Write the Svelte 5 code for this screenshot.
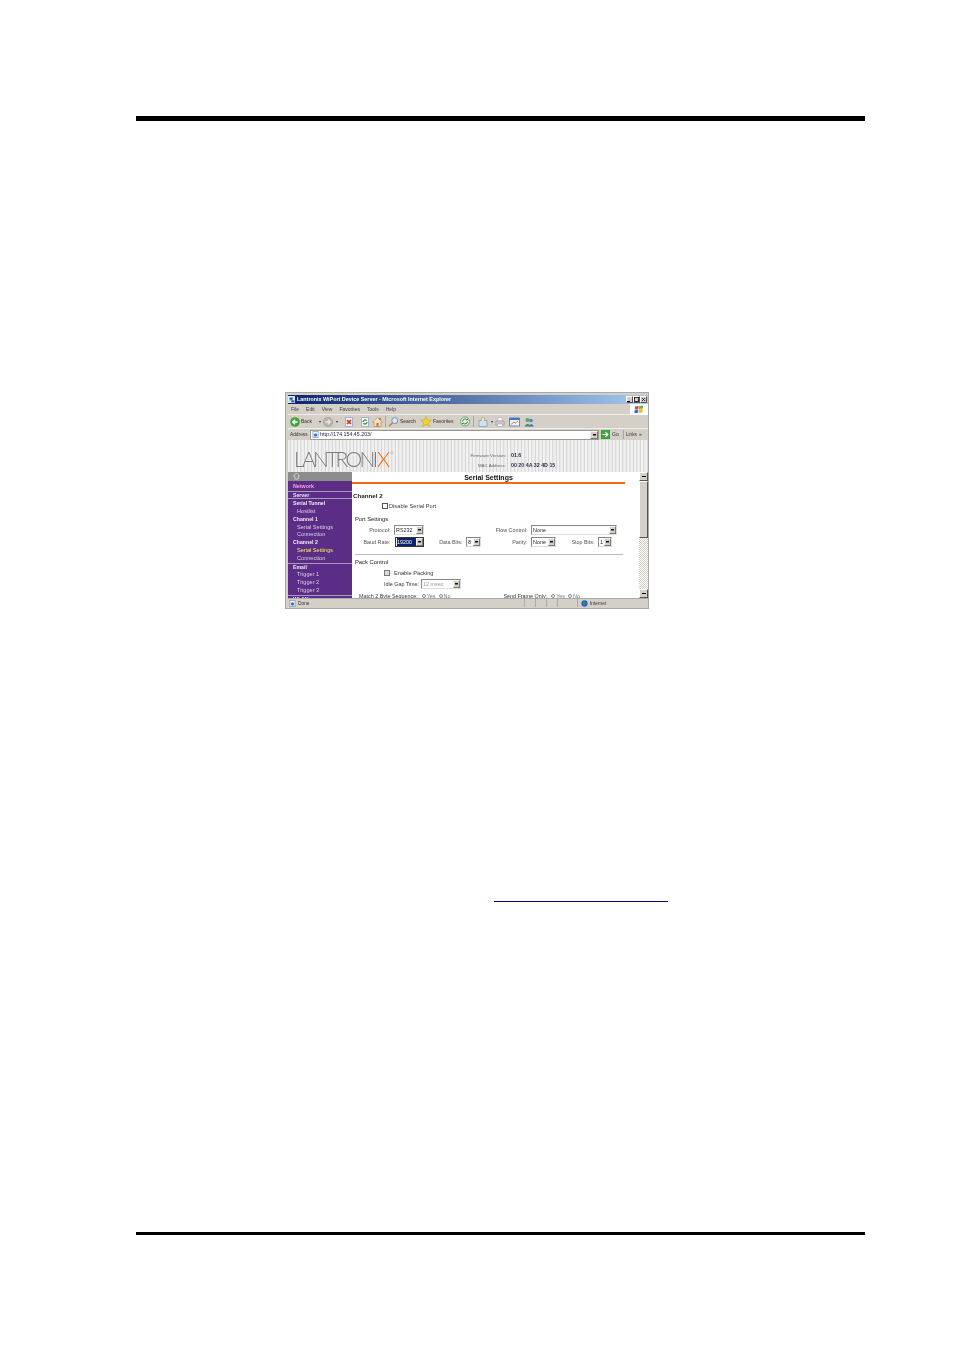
<script>
	const menus = ['File', 'Edit', 'View', 'Favorites', 'Tools', 'Help'];
	const sections = [
		[{ label: 'Network', kind: 'pink' }],
		[{ label: 'Server', kind: 'head' }],
		[
			{ label: 'Serial Tunnel', kind: 'head' },
			{ label: 'Hostlist', kind: 'sub' },
			{ label: 'Channel 1', kind: 'head' },
			{ label: 'Serial Settings', kind: 'sub' },
			{ label: 'Connection', kind: 'sub' },
			{ label: 'Channel 2', kind: 'head' },
			{ label: 'Serial Settings', kind: 'sub current' },
			{ label: 'Connection', kind: 'sub' }
		],
		[
			{ label: 'Email', kind: 'head' },
			{ label: 'Trigger 1', kind: 'sub' },
			{ label: 'Trigger 2', kind: 'sub' },
			{ label: 'Trigger 3', kind: 'sub' }
		],
		[{ label: 'WLAN', kind: 'head' }]
	];
</script>

<div class="page">
	<div class="rule top"></div>

	<div class="win">
		<div class="titlebar">
			<svg class="ie" viewBox="0 0 8 8"><rect width="8" height="8" fill="#e8eef8" /><path d="M1 6.500 6 1.500M2 2h3v2H2zM4 5h3v2H4z" fill="#2a5fb0" stroke="#2a5fb0" stroke-width=".6" /></svg>
			<span class="wintitle">Lantronix WiPort Device Server - Microsoft Internet Explorer</span>
			<div class="winbtns">
				<span class="winbtn"><i class="min"></i></span>
				<span class="winbtn"><i class="max"></i></span>
				<span class="winbtn"><svg viewBox="0 0 7 7"><path d="M1.500 1.500 5.500 5.500M5.500 1.500 1.500 5.500" stroke="#000" stroke-width="1.100" /></svg></span>
			</div>
		</div>

		<div class="menubar">
			{#each menus as m}
				<span class="menu">{m}</span>
			{/each}
			<div class="flag">
				<svg viewBox="0 0 10 9"><path d="M1 1.500 4.600 1 4.400 4 .8 4.500z" fill="#d9492c" /><path d="M5.200.9 9 .4 8.800 3.600 5 4z" fill="#6fb52c" /><path d="M.7 5 4.300 4.500 4 7.800.4 8.200z" fill="#2f6fd0" /><path d="M5 4.500 8.700 4.100 8.400 7.400 4.700 7.800z" fill="#f2b91c" /></svg>
			</div>
		</div>

		<div class="toolbar">
			<svg class="t10" viewBox="0 0 10 10"><circle cx="5" cy="5" r="4.800" fill="#3aa63a" /><path d="M7.600 5H3M5 2.800 2.800 5 5 7.200" fill="none" stroke="#fff" stroke-width="1.500" /></svg>
			<span class="tl back">Back</span>
			<span class="drop">▾</span>
			<svg class="t10 fwd" viewBox="0 0 10 10"><circle cx="5" cy="5" r="4.600" fill="#b9b6ae" stroke="#96938b" stroke-width=".6" /><path d="M2.600 5H7M5 2.800 7.200 5 5 7.200" fill="none" stroke="#e8e6e0" stroke-width="1.300" /></svg>
			<span class="drop">▾</span>
			<svg class="t10 stop" viewBox="0 0 10 10"><path d="M1.500.5h7v9h-7z" fill="#f4f4f4" stroke="#7d8fb8" stroke-width=".6" /><path d="M3 3 7 7M7 3 3 7" stroke="#d8261c" stroke-width="1.600" /></svg>
			<svg class="t10 refresh" viewBox="0 0 10 10"><path d="M1.500.5h7v9h-7z" fill="#f4f4f4" stroke="#7d8fb8" stroke-width=".6" /><path d="M3 5a2 2 0 0 1 3.600-1.200M7 5a2 2 0 0 1-3.600 1.200" fill="none" stroke="#2f9a35" stroke-width="1.200" /></svg>
			<svg class="t11 home" viewBox="0 0 11 10"><path d="M5.500.5.500 5H2v4.500h7V5h1.500z" fill="#f3e3bd" stroke="#a9845a" stroke-width=".6" /><path d="M4.500 6h2v3.500h-2z" fill="#c7692a" /><path d="M7.500 1h1.200v2H7.500z" fill="#c04a2a" /></svg>
			<i class="sep"></i>
			<svg class="t11" viewBox="0 0 11 10"><circle cx="6.800" cy="3.600" r="3" fill="#d8e8f8" stroke="#5f7da8" stroke-width=".8" /><path d="M4.600 5.800 1 9.300" stroke="#b8873a" stroke-width="1.600" /></svg>
			<span class="tl search">Search</span>
			<svg class="t12" viewBox="0 0 12 11"><path d="M6 .4 7.500 4l3.900.2-3 2.500 1 3.800L6 8.400 2.600 10.500l1-3.800-3-2.500L4.500 4z" fill="#f7d42c" stroke="#c2991c" stroke-width=".5" /></svg>
			<span class="tl fav">Favorites</span>
			<svg class="t12 media" viewBox="0 0 12 10"><circle cx="6" cy="5" r="4.500" fill="#e4eee4" stroke="#5a8f5a" stroke-width=".8" /><path d="M3.500 5A2.500 2.500 0 0 1 8 3.600L9 2.500M8.500 5A2.500 2.500 0 0 1 4 6.400L3 7.500" fill="none" stroke="#2f8a3a" stroke-width="1" /></svg>
			<i class="sep"></i>
			<svg class="t10 mail" viewBox="0 0 10 10"><path d="M1 3.500h8v6H1z" fill="#cfe0f4" stroke="#6d8cb8" stroke-width=".6" /><path d="M3.500 4V1.500a1.500 1.500 0 0 1 3 0V4" fill="#f2e2b4" stroke="#b39a5e" stroke-width=".6" /></svg>
			<span class="drop">▾</span>
			<svg class="t10 print" viewBox="0 0 10 10"><path d="M3 .5h4V4H3z" fill="#fff" stroke="#999" stroke-width=".5" /><path d="M.8 4h8.400v4H.8z" fill="#c8c8cc" stroke="#85858d" stroke-width=".5" /><path d="M2.500 7h5v2.500h-5z" fill="#fff" stroke="#999" stroke-width=".5" /></svg>
			<svg class="t11 edit" viewBox="0 0 11 10"><path d="M.5 1h10v8H.5z" fill="#eef3fa" stroke="#3a66a8" stroke-width=".7" /><path d="M.5 1h10v2H.5z" fill="#3a78c8" /><path d="M2 7.500 5 5l1.500 1L9 4" fill="none" stroke="#d0602a" stroke-width=".8" /></svg>
			<svg class="t10 msgr" viewBox="0 0 10 10"><circle cx="3.500" cy="3" r="2" fill="#4fa86a" /><path d="M.8 9.500C1 6 6 6 6.200 9.500z" fill="#3f8f5a" /><circle cx="7" cy="3.500" r="1.800" fill="#4a86c8" /><path d="M5 9.500C5.200 6.500 9.300 6.500 9.500 9.500z" fill="#3f72ae" /></svg>
		</div>

		<div class="addressbar">
			<span class="addr-label">Address</span>
			<div class="addr-input">
				<svg viewBox="0 0 8 8"><path d="M1 .5h6v7H1z" fill="#fff" stroke="#5f7da8" stroke-width=".7" /><circle cx="4" cy="4.500" r="2" fill="#3a78c8" /></svg>
				<span class="url">http://174.154.45.203/</span>
				<span class="arrowbtn"></span>
			</div>
			<svg class="go" viewBox="0 0 9 9"><path d="M0 0h9v9H0z" fill="#3aa63a" /><path d="M1.500 4.500h5M4.500 2.200l2.300 2.300-2.300 2.300" fill="none" stroke="#fff" stroke-width="1.200" /></svg>
			<span class="gotext">Go</span>
			<i class="sep short"></i>
			<span class="links">Links</span>
			<span class="more">»</span>
		</div>

		<div class="site">
			<header class="banner">
				<div class="logo">LANTRONI<span>X</span><sup>®</sup></div>
				<div class="device">
					<span class="dl">Firmware Version:</span><b>01.6</b>
					<span class="dl">MAC Address:</span><b>00 20 4A 32 4D 15</b>
				</div>
			</header>

			<div class="body">
				<nav>
					<div class="navhome">
						<svg viewBox="0 0 8 8"><path d="M4 .5.500 4H2v3.500h4V4h1.500z" fill="none" stroke="#e8e8e8" stroke-width=".8" /></svg>
					</div>
					{#each sections as section}
						<div class="section">
							{#each section as item}
								<div class="nav {item.kind}">{item.label}</div>
							{/each}
						</div>
					{/each}
				</nav>

				<main>
					<h1>Serial Settings</h1>
					<h2 class="channel">Channel 2</h2>
					<label class="check disable"><i class="box"></i>Disable Serial Port</label>
					<h3 class="port">Port Settings</h3>
					<div class="ports">
						<span class="l c1">Protocol:</span>
						<span class="sel c2">RS232<i></i></span>
						<span class="l c5">Flow Control:</span>
						<span class="sel flow">None<i></i></span>

						<span class="l c1">Baud Rate:</span>
						<span class="sel c2 baud"><em>19200</em><i></i></span>
						<span class="l">Data Bits:</span>
						<span class="sel">8<i></i></span>
						<span class="l">Parity:</span>
						<span class="sel">None<i></i></span>
						<span class="l">Stop Bits:</span>
						<span class="sel">1<i></i></span>
					</div>
					<hr />
					<h3 class="pack">Pack Control</h3>
					<label class="check packing"><i class="box grey"></i>Enable Packing</label>
					<div class="idle">
						<span>Idle Gap Time:</span>
						<span class="sel off">12 msec<i></i></span>
					</div>
					<div class="seq">
						<span class="seq1">Match 2 Byte Sequence:</span>
						<span class="radio">Yes</span>
						<span class="radio">No</span>
						<span class="seq2">Send Frame Only:</span>
						<span class="radio far">Yes</span>
						<span class="radio">No</span>
					</div>
				</main>

				<div class="scroll">
					<span class="sb up"></span>
					<span class="thumb"></span>
					<span class="track"></span>
					<span class="sb down"></span>
				</div>
			</div>
		</div>

		<div class="status">
			<svg viewBox="0 0 8 8"><path d="M1 .5h6v7H1z" fill="#fff" stroke="#5f7da8" stroke-width=".7" /><circle cx="4" cy="4.500" r="2" fill="#3a78c8" /></svg>
			<span class="done">Done</span>
			<span class="cell"></span><span class="cell"></span><span class="cell"></span><span class="cell wide"></span>
			<div class="zone">
				<svg viewBox="0 0 8 8"><circle cx="4" cy="4" r="3.600" fill="#2a62c0" /><path d="M2 2.500 4.500 2 5 4 3 5.500z" fill="#3aa03a" /></svg>
				<span>Internet</span>
			</div>
		</div>
	</div>

	<div class="linkline"></div>
	<div class="rule bottom"></div>
</div>

<style>
	:global(body) {
		background: #fff;
	}
	.page {
		width: 954px;
		height: 1350px;
		box-sizing: border-box;
		padding: 116px 89px 0 136px;
		overflow: hidden;
		font-family: 'Liberation Sans', Arial, sans-serif;
	}
	.rule {
		background: #000;
	}
	.rule.top {
		height: 5px;
	}
	.rule.bottom {
		height: 3px;
		margin-top: 330px;
	}
	.linkline {
		width: 174px;
		height: 1px;
		background: #000080;
		margin: 292px 0 0 358px;
	}

	.win {
		width: 364px;
		height: 217px;
		margin: 271px 0 0 149px;
		box-sizing: border-box;
		border: 1px solid #aaa8a2;
		padding: 2px 0 1px 2px;
		background: #d4d0c8;
		display: flex;
		flex-direction: column;
		font-size: 5px;
		line-height: 7px;
		color: #333;
		filter: blur(0.3px);
	}
	.titlebar {
		height: 9px;
		flex: none;
		display: flex;
		align-items: center;
		background: linear-gradient(90deg, #0a246a, #a6caf0);
		padding-right: 1px;
	}
	.ie {
		width: 7px;
		height: 7px;
		margin-right: 2px;
	}
	.wintitle {
		color: #fff;
		font-weight: 700;
		font-size: 5.4px;
		white-space: nowrap;
	}
	.winbtns {
		margin-left: auto;
		display: flex;
		gap: 0;
	}
	.winbtn {
		width: 7px;
		height: 7px;
		background: #d4d0c8;
		border: 1px solid #fff;
		border-right-color: #555;
		border-bottom-color: #555;
		box-sizing: border-box;
		position: relative;
		display: block;
	}
	.winbtn svg {
		display: block;
		width: 5px;
		height: 5px;
	}
	.winbtn .min {
		position: absolute;
		left: 0;
		bottom: 0;
		width: 3px;
		height: 1px;
		background: #000;
	}
	.winbtn .max {
		position: absolute;
		inset: 0;
		border: 1px solid #333;
		box-sizing: border-box;
	}
	.menubar {
		height: 11px;
		flex: none;
		display: flex;
		align-items: center;
		padding-left: 3px;
		gap: 7px;
		border-bottom: 1px solid #eee;
		box-sizing: border-box;
	}
	.menu {
		color: #444;
	}
	.flag {
		margin-left: auto;
		width: 18px;
		height: 11px;
		background: #fff;
		display: flex;
		align-items: center;
		justify-content: center;
	}
	.flag svg {
		width: 10px;
		height: 9px;
	}
	.toolbar {
		height: 14px;
		flex: none;
		display: flex;
		align-items: center;
		padding-left: 2px;
		border-bottom: 1px solid #eee;
		box-sizing: border-box;
	}
	.t10 {
		width: 10px;
		height: 10px;
		flex: none;
	}
	.t11 {
		width: 11px;
		height: 10px;
		flex: none;
	}
	.t12 {
		width: 12px;
		height: 11px;
		flex: none;
	}
	.tl {
		margin-left: 1px;
		color: #333;
		white-space: nowrap;
	}
	.back {
		width: 15px;
	}
	.search {
		width: 20px;
	}
	.fav {
		width: 23px;
	}
	.drop {
		font-size: 4px;
		color: #333;
		width: 5px;
		text-align: center;
		margin-left: 1px;
	}
	.fwd {
		margin-left: 1px;
	}
	.stop {
		margin-left: 5px;
	}
	.refresh {
		margin-left: 6px;
	}
	.home {
		margin-left: 2px;
	}
	.media {
		margin-left: 3px;
	}
	.mail {
		margin-left: 2px;
	}
	.print {
		margin-left: 1px;
	}
	.edit {
		margin-left: 4px;
	}
	.msgr {
		margin-left: 4px;
	}
	.sep {
		width: 1px;
		height: 11px;
		background: #a8a59d;
		margin: 0 2px;
		flex: none;
	}
	.addressbar {
		height: 11px;
		flex: none;
		display: flex;
		align-items: center;
		padding-left: 2px;
	}
	.addr-label {
		width: 20px;
		flex: none;
		font-size: 4.8px;
	}
	.addr-input {
		width: 289px;
		height: 10px;
		flex: none;
		background: #fff;
		border: 1px solid #9c9a92;
		box-sizing: border-box;
		display: flex;
		align-items: center;
		padding-left: 1px;
		gap: 1px;
	}
	.addr-input svg {
		width: 7px;
		height: 7px;
	}
	.url {
		font-size: 5.3px;
		color: #224;
	}
	.arrowbtn,
	.sel i {
		display: block;
		background: #d4d0c8 linear-gradient(#111, #111) center / 3px 1.5px no-repeat;
		border: 1px solid #f4f4f0;
		border-right-color: #777;
		border-bottom-color: #777;
		box-sizing: border-box;
		flex: none;
	}
	.arrowbtn {
		margin-left: auto;
		width: 8px;
		height: 8px;
	}
	.go {
		width: 9px;
		height: 9px;
		margin-left: 2px;
		flex: none;
	}
	.gotext {
		margin-left: 2px;
		width: 9px;
		font-size: 5px;
	}
	.sep.short {
		height: 9px;
		margin: 0 2px;
	}
	.links {
		width: 12px;
		font-size: 4.6px;
	}
	.more {
		margin-left: 1px;
	}

	.site {
		height: 158px;
		flex: none;
		background: #fff;
		display: flex;
		flex-direction: column;
		overflow: hidden;
	}
	.banner {
		height: 32px;
		flex: none;
		box-sizing: border-box;
		padding-left: 6px;
		display: flex;
		align-items: center;
		background: repeating-linear-gradient(90deg, #eeeeee 0 2px, #d8d8d8 2px 3px, #f2f2f2 3px 5px, #dcdcdc 5px 6px, #e8e8e8 6px 7px);
	}
	.logo {
		width: 176px;
		flex: none;
		font-family: Lato, 'Liberation Sans', sans-serif;
		font-weight: 300;
		font-size: 21px;
		line-height: 26px;
		letter-spacing: -2.7px;
		color: #7c7c7c;
		white-space: nowrap;
		padding-top: 6px;
	}
	.logo span {
		color: #f26b0f;
		font-weight: 300;
		margin-left: 1.5px;
	}
	.logo sup {
		font-size: 4px;
		line-height: 0;
		vertical-align: 12px;
		letter-spacing: 0;
		margin-left: 3px;
	}
	.device {
		display: grid;
		grid-template-columns: 36px auto;
		column-gap: 5px;
		row-gap: 3px;
		padding-top: 9px;
		white-space: nowrap;
		font-size: 4.4px;
	}
	.dl {
		text-align: right;
		color: #666;
	}
	.device b {
		color: #303050;
		font-size: 5.3px;
	}

	.body {
		flex: 1;
		display: flex;
		min-height: 0;
	}
	nav {
		width: 64px;
		flex: none;
		background: #5b2d86;
		overflow: hidden;
	}
	.navhome {
		height: 9px;
		background: #8c8c8c;
		padding-left: 5px;
	}
	.navhome svg {
		display: block;
		width: 7px;
		height: 8px;
	}
	.section {
		border-bottom: 1px solid #a99cb8;
	}
	.section:nth-child(3) {
		border-bottom: 0;
		box-shadow: inset 0 -1px #a99cb8;
	}
	.section:nth-child(4) {
		padding-top: 1px;
	}
	.nav {
		height: 7.8px;
		line-height: 7.8px;
		font-size: 5.6px;
		color: #efe9f5;
		padding-left: 5px;
		white-space: nowrap;
	}
	.nav.head {
		font-weight: 700;
		font-size: 5.2px;
	}
	.nav.pink {
		color: #f0a8e0;
		font-weight: 700;
		font-size: 5.3px;
		height: 8.5px;
		line-height: 8.5px;
		padding-top: 1px;
	}
	.nav.sub {
		padding-left: 9px;
		color: #d9cfe6;
	}
	.nav.current {
		color: #f4ee5a;
	}

	main {
		width: 287px;
		flex: none;
		overflow: hidden;
		display: flex;
		flex-direction: column;
		align-items: flex-start;
		color: #3a3a3a;
	}
	h1,
	h2,
	h3 {
		margin: 0;
		flex: none;
	}
	h1 {
		width: 273px;
		height: 12px;
		box-sizing: border-box;
		border-bottom: 2px solid #f26b0f;
		padding-top: 1px;
		text-align: center;
		font-size: 7px;
		line-height: 10px;
		color: #111;
	}
	h2 {
		font-size: 6.2px;
		line-height: 8px;
		margin: 8px 0 0 1px;
		color: #222;
	}
	h3 {
		font-size: 5.8px;
		line-height: 8px;
		font-weight: 400;
		margin-left: 3px;
		color: #222;
	}
	.check {
		display: flex;
		align-items: center;
		height: 8px;
		flex: none;
		white-space: nowrap;
		font-size: 5.7px;
	}
	.box {
		width: 6px;
		height: 6px;
		box-sizing: border-box;
		border: 1px solid #555;
		background: #fff;
		margin-right: 1px;
		flex: none;
	}
	.box.grey {
		background: #ddd;
		border-color: #777;
		margin-right: 4px;
	}
	.disable {
		margin: 2px 0 0 30px;
	}
	.port {
		margin-top: 5px;
	}
	.ports {
		margin-top: 2px;
		display: grid;
		grid-template-columns: 42px 30px 42px 15px 50px 25px 42px 14px 5px;
		grid-auto-rows: 10px;
		row-gap: 2px;
		flex: none;
		align-items: center;
		white-space: nowrap;
		font-size: 5.4px;
	}
	.l {
		text-align: right;
		padding-right: 3.5px;
		font-size: 5.4px;
		color: #555;
	}
	.c1 {
		grid-column: 1;
	}
	.c2 {
		grid-column: 2;
	}
	.c5 {
		grid-column: 5;
	}
	.sel {
		height: 10px;
		box-sizing: border-box;
		border: 1px solid #888;
		border-right-color: #ddd;
		border-bottom-color: #ddd;
		background: #fff;
		display: flex;
		align-items: center;
		justify-content: space-between;
		padding-left: 1px;
		color: #2a2a2a;
		overflow: hidden;
	}
	.sel i {
		width: 7px;
		height: 8px;
	}
	.sel em {
		font-style: normal;
		background: #0a246a;
		color: #fff;
		flex: 1;
		line-height: 8px;
	}
	.flow {
		grid-column: 6 / 10;
	}
	.baud {
		margin-left: 1px;
		border-color: #333;
	}
	hr {
		width: 268px;
		height: 1px;
		border: 0;
		background: #bbb;
		margin: 7px 0 0 3px;
		flex: none;
	}
	.pack {
		margin-top: 3px;
	}
	.packing {
		margin: 3px 0 0 32px;
	}
	.idle {
		margin: 2px 0 0 32px;
		display: flex;
		align-items: center;
		height: 10px;
		flex: none;
		gap: 2px;
		white-space: nowrap;
		font-size: 5.4px;
	}
	.off {
		width: 40px;
		color: #999;
		background: #fff;
	}
	.seq {
		margin: 3px 0 0 7px;
		display: flex;
		align-items: center;
		gap: 3px;
		height: 8px;
		flex: none;
		white-space: nowrap;
		font-size: 5.4px;
	}
	.seq1 {
		margin-right: 1px;
	}
	.seq2 {
		margin-left: 50px;
	}
	.far {
		margin-left: 1px;
	}
	.radio {
		color: #777;
		display: flex;
		align-items: center;
		gap: 1px;
	}
	.radio::before {
		content: '';
		width: 4px;
		height: 4px;
		border: 1px solid #888;
		border-radius: 50%;
		box-sizing: border-box;
	}
	.scroll {
		width: 9px;
		flex: none;
		display: flex;
		flex-direction: column;
	}
	.sb {
		height: 9px;
		flex: none;
		box-sizing: border-box;
		border: 1px solid #fff;
		border-right-color: #555;
		border-bottom-color: #555;
		background: #d4d0c8 linear-gradient(#000, #000) center / 4px 1px no-repeat;
	}
	.thumb {
		height: 57px;
		flex: none;
		box-sizing: border-box;
		border: 1px solid #fff;
		border-right-color: #555;
		border-bottom-color: #555;
		background: #d4d0c8;
	}
	.track {
		flex: 1;
		background: repeating-conic-gradient(#d4d0c8 0 25%, #fff 0 50%) 0 0 / 2px 2px;
	}
	.status {
		height: 9px;
		flex: none;
		display: flex;
		align-items: center;
		padding-left: 1px;
		border-top: 1px solid #aaa;
		box-sizing: border-box;
	}
	.status svg {
		width: 7px;
		height: 7px;
		flex: none;
	}
	.done {
		margin-left: 2px;
		width: 226px;
		flex: none;
		font-size: 4.8px;
	}
	.cell {
		width: 11px;
		height: 8px;
		box-sizing: border-box;
		border-left: 1px solid #aaa;
		flex: none;
	}
	.cell.wide {
		width: 20px;
	}
	.zone {
		display: flex;
		align-items: center;
		gap: 2px;
		border-left: 1px solid #aaa;
		padding-left: 3px;
		height: 8px;
		font-size: 4.8px;
	}
</style>
